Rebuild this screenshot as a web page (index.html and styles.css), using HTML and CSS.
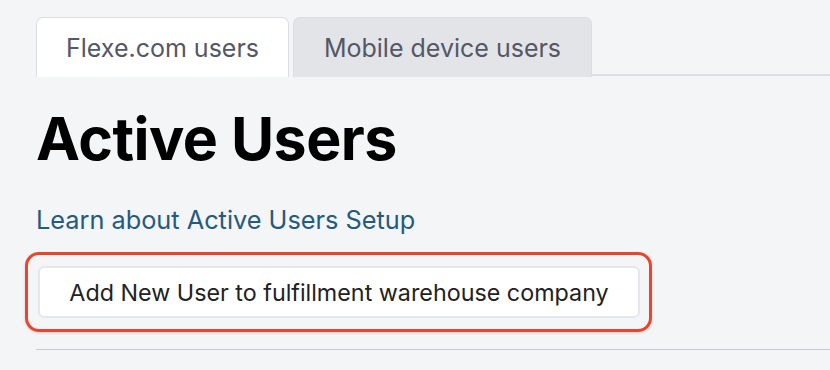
FILE: index.html
```html
<!DOCTYPE html>
<html>
<head>
<meta charset="utf-8">
<link rel="stylesheet" href="styles.css">
</head>
<body>
<div class="page">
  <div class="tabs">
    <div class="tab active">Flexe.com users</div>
    <div class="tab">Mobile device users</div>
    <div class="tab-rest"></div>
  </div>
  <div class="content">
    <h1 class="title">Active Users</h1>
    <a class="learn" href="#">Learn about Active Users Setup</a>
    <div class="highlight">
      <button class="add-btn">Add New User to fulfillment warehouse company</button>
    </div>
    <hr class="divider">
  </div>
</div>
</body>
</html>
```
FILE: styles.css
```css
* { box-sizing: border-box; }
html, body {
  margin: 0;
  background: #f4f5f7;
  font-family: Inter, "Noto Sans", sans-serif;
}
.page {
  padding: 17px 0 0 36px;
}
.tabs {
  display: flex;
  align-items: flex-end;
  height: 60px;
}
.tab {
  height: 60px;
  padding: 0 10px;
  display: flex;
  align-items: center;
  justify-content: center;
  font-size: 25px;
  color: #545766;
  border: 1px solid #dcdde2;
  border-bottom: none;
  border-radius: 7px 7px 0 0;
  background: #e3e4e8;
  margin-right: 4px;
}
.tab.active {
  background: #fff;
  width: 253px;
}
.tab:nth-child(2) {
  width: 299px;
  margin-right: 0;
}
.tab-rest {
  flex: 1;
  border-bottom: 2px solid #dcdde2;
  align-self: flex-end;
  margin-bottom: 1px;
}
.content {
  padding-top: 26px;
}
.title {
  margin: 0;
  font-size: 59px;
  font-weight: 700;
  line-height: 72px;
  color: #000;
  letter-spacing: -0.5px;
}
.learn {
  display: block;
  margin-top: 30px;
  font-size: 25.3px;
  line-height: 30px;
  color: #245a7e;
  text-decoration: none;
}
.highlight {
  display: inline-block;
  margin: 17px 0 0 -11px;
  padding: 11px 9px 11px 10px;
  border: 3px solid #e8452c;
  border-radius: 14px;
  box-shadow: 0 1px 3px rgba(0,0,0,0.15);
}
.add-btn {
  display: block;
  font-family: Inter, "Noto Sans", sans-serif;
  font-size: 23.3px;
  color: #222;
  background: #fff;
  border: 2px solid #e6e7ec;
  border-radius: 6px;
  height: 52px;
  padding: 0;
  width: 602px;
}
.divider {
  margin: 17px 0 0 0;
  border: none;
  border-top: 1px solid #c8c9cd;
}
```
